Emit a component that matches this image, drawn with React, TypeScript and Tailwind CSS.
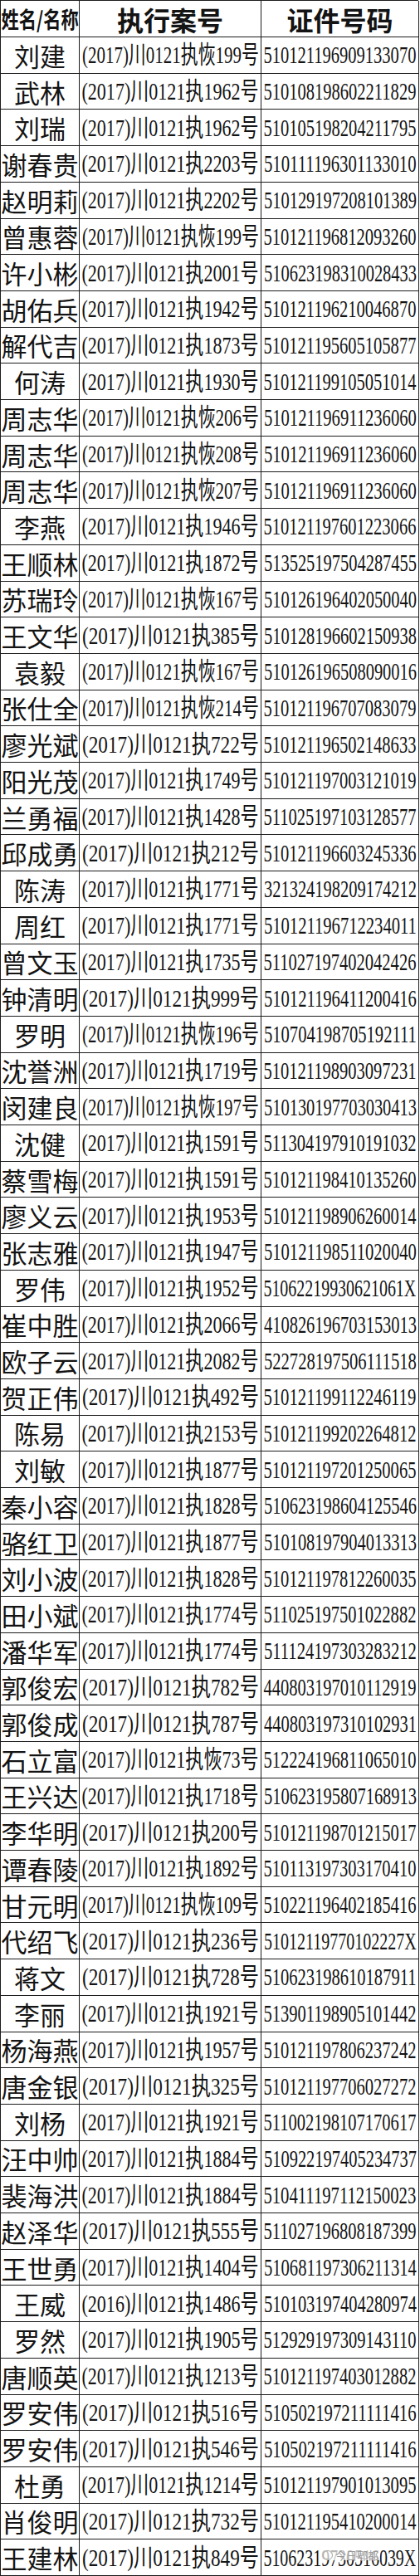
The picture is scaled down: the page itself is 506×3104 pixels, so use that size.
import React, { useLayoutEffect, useRef, useState } from "react";

const RAW = `刘建|(2017)川0121执恢199号|510121196909133070
武林|(2017)川0121执1962号|510108198602211829
刘瑞|(2017)川0121执1962号|510105198204211795
谢春贵|(2017)川0121执2203号|510111196301133010
赵明莉|(2017)川0121执2202号|510129197208101389
曾惠蓉|(2017)川0121执恢199号|510121196812093260
许小彬|(2017)川0121执2001号|510623198310028433
胡佑兵|(2017)川0121执1942号|510121196210046870
解代吉|(2017)川0121执1873号|510121195605105877
何涛|(2017)川0121执1930号|510121199105051014
周志华|(2017)川0121执恢206号|510121196911236060
周志华|(2017)川0121执恢208号|510121196911236060
周志华|(2017)川0121执恢207号|510121196911236060
李燕|(2017)川0121执1946号|510121197601223066
王顺林|(2017)川0121执1872号|513525197504287455
苏瑞玲|(2017)川0121执恢167号|510126196402050040
王文华|(2017)川0121执385号|510128196602150938
袁毅|(2017)川0121执恢167号|510126196508090016
张仕全|(2017)川0121执恢214号|510121196707083079
廖光斌|(2017)川0121执722号|510121196502148633
阳光茂|(2017)川0121执1749号|510121197003121019
兰勇福|(2017)川0121执1428号|511025197103128577
邱成勇|(2017)川0121执212号|510121196603245336
陈涛|(2017)川0121执1771号|321324198209174212
周红|(2017)川0121执1771号|510121196712234011
曾文玉|(2017)川0121执1735号|511027197402042426
钟清明|(2017)川0121执999号|510121196411200416
罗明|(2017)川0121执恢196号|510704198705192111
沈誉洲|(2017)川0121执1719号|510121198903097231
闵建良|(2017)川0121执恢197号|510130197703030413
沈健|(2017)川0121执1591号|511304197910191032
蔡雪梅|(2017)川0121执1591号|510121198410135260
廖义云|(2017)川0121执1953号|510121198906260014
张志雅|(2017)川0121执1947号|510121198511020040
罗伟|(2017)川0121执1952号|51062219930621061X
崔中胜|(2017)川0121执2066号|410826196703153013
欧子云|(2017)川0121执2082号|522728197506111518
贺正伟|(2017)川0121执492号|510121199112246119
陈易|(2017)川0121执2153号|510121199202264812
刘敏|(2017)川0121执1877号|510121197201250065
秦小容|(2017)川0121执1828号|510623198604125546
骆红卫|(2017)川0121执1877号|510108197904013313
刘小波|(2017)川0121执1828号|510121197812260035
田小斌|(2017)川0121执1774号|511025197501022882
潘华军|(2017)川0121执1774号|511124197303283212
郭俊宏|(2017)川0121执782号|440803197010112919
郭俊成|(2017)川0121执787号|440803197310102931
石立富|(2017)川0121执恢73号|512224196811065010
王兴达|(2017)川0121执1718号|510623195807168913
李华明|(2017)川0121执200号|510121198701215017
谭春陵|(2017)川0121执1892号|510113197303170410
甘元明|(2017)川0121执恢109号|510221196402185416
代绍飞|(2017)川0121执236号|51012119770102227X
蒋文|(2017)川0121执728号|510623198610187911
李丽|(2017)川0121执1921号|513901198905101442
杨海燕|(2017)川0121执1957号|510121197806237242
唐金银|(2017)川0121执325号|510121197706027272
刘杨|(2017)川0121执1921号|511002198107170617
汪中帅|(2017)川0121执1884号|510922197405234737
裴海洪|(2017)川0121执1884号|510411197112150023
赵泽华|(2017)川0121执555号|511027196808187399
王世勇|(2017)川0121执1404号|510681197306211314
王威|(2016)川0121执1486号|510103197404280974
罗然|(2017)川0121执1905号|512929197309143110
唐顺英|(2017)川0121执1213号|510121197403012882
罗安伟|(2017)川0121执516号|510502197211111416
罗安伟|(2017)川0121执546号|510502197211111416
杜勇|(2017)川0121执1214号|510121197901013095
肖俊明|(2017)川0121执732号|510121195410200014
王建林|(2017)川0121执849号|51062319730516039X`;

const ROWS = RAW.split("\n").map((l) => l.split("|"));

function Fit({
  text,
  target,
  maxScale = 1,
  className = "",
}: {
  text: string;
  target: number;
  maxScale?: number;
  className?: string;
}) {
  const ref = useRef<HTMLSpanElement>(null);
  const [s, setS] = useState(1);
  useLayoutEffect(() => {
    const measure = () => {
      const el = ref.current;
      if (!el) return;
      const w = el.offsetWidth;
      if (w > 0) setS(Math.min(maxScale, target / w));
    };
    measure();
    if (document.fonts && document.fonts.ready) {
      document.fonts.ready.then(measure);
    }
  }, [text, target, maxScale]);
  return (
    <span
      ref={ref}
      className={"inline-block shrink-0 whitespace-nowrap origin-center " + className}
      style={{ transform: `scaleX(${s})` }}
    >
      {text}
    </span>
  );
}

const cell =
  "flex items-center justify-center overflow-hidden border-r border-b border-[#1c1c1c]";

export default function App() {
  return (
    <div className="w-[506px] bg-white">
      <div className="grid h-[3104px] w-[504px] grid-cols-[95px_219px_190px] grid-rows-[44px_repeat(70,minmax(0,1fr))] border-l border-t border-[#1c1c1c] text-[#141414] font-['Liberation_Serif','Noto_Sans_CJK_SC',serif]">
        <div className={cell}>
          <Fit
            text="姓名/名称"
            target={93}
            className="font-['Noto_Sans_CJK_SC',sans-serif] text-[27px] font-bold leading-none"
          />
        </div>
        <div className={cell}>
          <span className="font-['Noto_Sans_CJK_SC',sans-serif] text-[32px] font-bold leading-none">
            执行案号
          </span>
        </div>
        <div className={cell}>
          <span className="font-['Noto_Sans_CJK_SC',sans-serif] text-[32px] font-bold leading-none">
            证件号码
          </span>
        </div>
        {ROWS.map(([name, caseNo, id], i) => (
          <React.Fragment key={i}>
            <div className={cell}>
              <Fit
                text={name}
                target={94}
                className="font-['Noto_Sans_CJK_SC',sans-serif] text-[31px] font-normal leading-none"
              />
            </div>
            <div className={cell}>
              <Fit text={caseNo} target={213} maxScale={2} className="text-[30px] leading-none" />
            </div>
            <div className={cell + " relative"}>
              <Fit text={id} target={184} maxScale={2} className="text-[30px] leading-none" />
              {i === ROWS.length - 1 && (
                <div className="absolute left-[72px] top-[12px] flex items-center gap-[3px] bg-white/70 px-[2px] text-[13px] leading-none text-[#9a9a9a] font-['Noto_Sans_CJK_SC',sans-serif]">
                  <span className="inline-block h-[12px] w-[12px] rounded-full border border-[#a8a8a8]" />
                  <span>今日郫都</span>
                </div>
              )}
            </div>
          </React.Fragment>
        ))}
      </div>
    </div>
  );
}
